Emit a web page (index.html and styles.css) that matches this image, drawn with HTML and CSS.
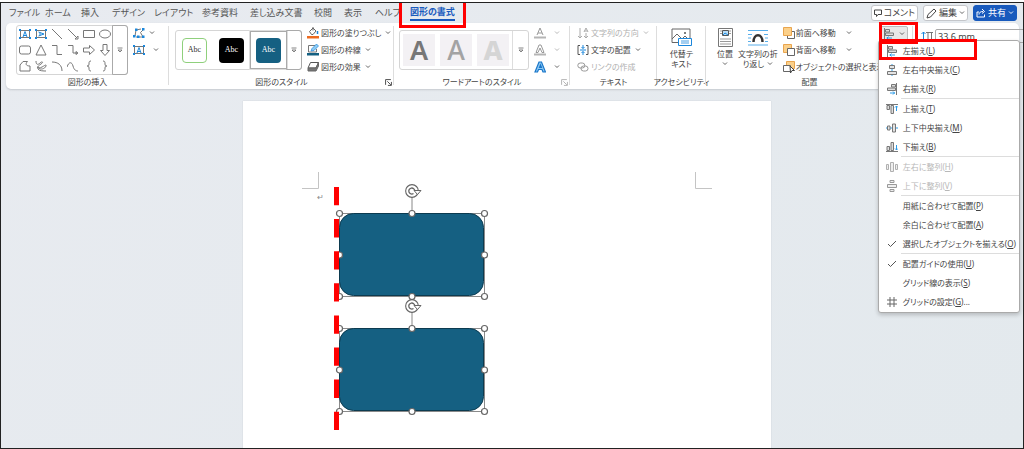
FILE: index.html
```
<!DOCTYPE html>
<html lang="ja">
<head>
<meta charset="utf-8">
<meta name="viewport" content="width=device-width, initial-scale=1">
<title>図形の書式</title>
<link rel="stylesheet" href="styles.css">
</head>
<body>
<svg class="defs" aria-hidden="true">
  <symbol id="chev" viewBox="0 0 6 4"><path d="M1 .5l2 2 2-2" fill="none" stroke="currentColor" stroke-width=".9"/></symbol>
  <symbol id="more" viewBox="0 0 6 6"><path d="M.5 1h5M1 3l2 2 2-2z" fill="none" stroke="#666" stroke-width=".8"/></symbol>
  <symbol id="launch" viewBox="0 0 6 6"><path d="M.5 5V.5H5M2 2l3 3M5.500 2.500v3h-3" fill="none" stroke="currentColor" stroke-width=".8"/></symbol>
  <symbol id="check" viewBox="0 0 12 12"><path d="M2 6l2.500 2.500L10 3" fill="none" stroke="#555"/></symbol>
  <symbol id="a-left" viewBox="0 0 12 12"><path d="M1.500 0v12" stroke="#777"/><path d="M2.500 1.500h4v2.500h-4zM2.500 5h8v2.500h-8z" fill="#ddd" stroke="#777"/><path d="M9 10H3.500M5.500 8.500L4 10l1.500 1.500" fill="none" stroke="#2b9be8"/></symbol>
  <symbol id="a-center" viewBox="0 0 12 12"><path d="M6 0v12" stroke="#2b9be8"/><path d="M3.500 1.500h5v3h-5zM1.500 7.500h9v3h-9z" fill="#e4e4e4" stroke="#777"/></symbol>
  <symbol id="a-right" viewBox="0 0 12 12"><path d="M10.500 0v12" stroke="#777"/><path d="M5.500 1.500h4V4h-4zM1.500 5h8v2.500h-8z" fill="#ddd" stroke="#777"/><path d="M4 10h5M7 8.500L8.500 10 7 11.500" fill="none" stroke="#2b9be8"/></symbol>
  <symbol id="a-top" viewBox="0 0 12 12"><path d="M0 1.500h12" stroke="#777"/><path d="M1 2.500h2.500v4H1zM5 2.500h2.500v8H5z" fill="#ddd" stroke="#777"/><path d="M10.500 8V3M9 4.500L10.500 3 12 4.500" fill="none" stroke="#2b9be8"/></symbol>
  <symbol id="a-mid" viewBox="0 0 12 12"><path d="M0 6h12" stroke="#2b9be8"/><path d="M1.500 4H4v4H1.500zM6.500 2h3v8h-3z" fill="#e4e4e4" stroke="#777"/></symbol>
  <symbol id="a-bottom" viewBox="0 0 12 12"><path d="M0 10.500h12" stroke="#777"/><path d="M1 5.500h2.500v4H1zM5 1.500h2.500v8H5z" fill="#ddd" stroke="#777"/><path d="M10.500 4v5M9 7.500L10.500 9 12 7.500" fill="none" stroke="#2b9be8"/></symbol>
  <symbol id="d-h" viewBox="0 0 12 12"><path d="M.5 3.500h2v5h-2zM4.500 1.500h3v9h-3zM9.500 3.500h2v5h-2z" fill="#eee" stroke="#b0b0b0"/></symbol>
  <symbol id="d-v" viewBox="0 0 12 12"><path d="M4 .5h4v2H4zM1.500 4.500h9v3h-9zM4 9.500h4v2H4z" fill="#eee" stroke="#999"/></symbol>
  <symbol id="grid" viewBox="0 0 12 12"><path d="M4 1v10M8 1v10M1 4h10M1 8h10" stroke="#666"/></symbol>
  <symbol id="selected" viewBox="0 0 155 113">
    <rect x="5.500" y="26.500" width="145" height="83" fill="#fff" stroke="#8a8a8a"/>
    <rect x="5.500" y="26.500" width="144" height="82" rx="14" fill="#156082" stroke="#0c3b50"/>
    <path d="M78 10v16" stroke="#888"/>
    <g fill="#fff" stroke="#666" stroke-width="1.200"><circle cx="5.500" cy="26.500" r="3"/><circle cx="78" cy="26.500" r="3"/><circle cx="150.500" cy="26.500" r="3"/><circle cx="5.500" cy="68" r="3"/><circle cx="150.500" cy="68" r="3"/><circle cx="5.500" cy="109.500" r="3"/><circle cx="78" cy="109.500" r="3"/><circle cx="150.500" cy="109.500" r="3"/></g>
    <circle cx="78" cy="4" r="5" fill="none" stroke="#666" stroke-width="3.800"/>
    <circle cx="78" cy="4" r="5" fill="#fff" stroke="#fff" stroke-width="1.600"/>
    <path d="M79.500 6.500a3 3 0 1 1 1.300-2.500" fill="none" stroke="#666" stroke-width="1.300"/>
    <path d="M80 3.500h7L83.500 7.500z" fill="#fff" stroke="#666"/>
  </symbol>
</svg>

<div class="app">
  <header class="topbar">
    <nav class="tabs">
      <a href="#">ファイル</a><a href="#">ホーム</a><a href="#">挿入</a><a href="#">デザイン</a><a href="#">レイアウト</a><a href="#">参考資料</a><a href="#">差し込み文書</a><a href="#">校閲</a><a href="#">表示</a><a href="#">ヘルプ</a><a href="#" class="active">図形の書式</a>
    </nav>
    <div class="actions">
      <button class="action"><svg width="8" height="8" viewBox="0 0 8 8"><path d="M.5 1h7v4.500H4l-1.500 2v-2h-2z" fill="none" stroke="#444"/></svg>コメント</button>
      <button class="action"><svg width="11" height="11" viewBox="0 0 11 11"><path d="M1 10l1-3.500 6-5.500 2 2-5.500 6z" fill="none" stroke="#444"/></svg>編集<svg class="chev"><use href="#chev"/></svg></button>
      <button class="action share"><svg width="10" height="10" viewBox="0 0 10 10"><path d="M3 4H1v5h7.500V6.500M3 6.500c0-2 1.500-3 4-3M6 1l2.500 2.500L6 5.500" fill="none" stroke="#fff"/></svg>共有<svg class="chev"><use href="#chev"/></svg></button>
    </div>
  </header>

  <main class="ribbon">
    <section class="group g-insert">
      <div class="group-body">
        <div class="gallery">
          <div class="shapes">
            <svg viewBox="0 0 12 12"><path d="M1.500 2.500h9v7h-9z" stroke="#777"/><path d="M4 9l2-5.500L8 9M4.500 7.500h3" stroke="#1b87dc"/><path class="dots" d="M0 1h2v2H0zM10 1h2v2h-2zM0 9h2v2H0zM10 9h2v2h-2z"/></svg>
            <svg viewBox="0 0 12 12"><path d="M1.500 2.500h9v7h-9z" stroke="#777"/><path d="M3.500 4L9 6 3.500 8M5 4.500v3" stroke="#1b87dc"/><path class="dots" d="M0 1h2v2H0zM10 1h2v2h-2zM0 9h2v2H0zM10 9h2v2h-2z"/></svg>
            <svg viewBox="0 0 12 12"><path d="M1 1l10 10"/></svg>
            <svg viewBox="0 0 12 12"><path d="M1 1l9 9M11 8v3H8z"/></svg>
            <svg viewBox="0 0 12 12"><path d="M.5 2.500h11v7H.5z"/></svg>
            <svg viewBox="0 0 12 12"><ellipse cx="6" cy="6" rx="5.500" ry="4"/></svg>
            <svg viewBox="0 0 12 12"><rect x=".5" y="2" width="11" height="8" rx="2"/></svg>
            <svg viewBox="0 0 12 12"><path d="M6 1l5 10H1z"/></svg>
            <svg viewBox="0 0 12 12"><path d="M1 1.500h5v9h5"/></svg>
            <svg viewBox="0 0 12 12"><path d="M1 1.500h5V9h4M9 7.500L11 9l-2 1.500z"/></svg>
            <svg viewBox="0 0 12 12"><path d="M.5 4h6V1.500L11.500 6l-5 4.500V8h-6z"/></svg>
            <svg viewBox="0 0 12 12"><path d="M4 .5v6H1.500L6 11.500l4.500-5H8v-6z"/></svg>
            <svg viewBox="0 0 12 12"><path d="M1 11V5l3-3.500h4.500C6 4 7 6 11 6v5z"/></svg>
            <svg viewBox="0 0 12 12"><path d="M1 1c0 4 2 4 4 2s4-1 1 1-5 4-2 4 8-5 7-2-6 4-7 2-2-1-1 1 6 2 8 2"/></svg>
            <svg viewBox="0 0 12 12"><path d="M1 2c6 0 10 3 10 9"/></svg>
            <svg viewBox="0 0 12 12"><path d="M0 7c2-6 5-5 6-1s3 5 5 5"/></svg>
            <svg viewBox="0 0 12 12"><path d="M8 1C6 1 6 2 6 4S5 6 4 6c1 0 2 0 2 2s0 3 2 3"/></svg>
            <svg viewBox="0 0 12 12"><path d="M4 1c2 0 2 1 2 3s1 2 2 2c-1 0-2 0-2 2s0 3-2 3"/></svg>
          </div>
          <button class="more framed" aria-label="その他の図形"><svg><use href="#more"/></svg></button>
        </div>
        <div class="list">
          <button class="cmd" aria-label="図形の編集"><svg class="ico" viewBox="0 0 12 12"><path d="M2 9l1-6 5-1M10 3L7.500 5.500 10 10H3" fill="none" stroke="#777"/><path d="M0 8h2.500v2.500H0zM2 1.500h2.500V4H2zM9 1h2.500v2.500H9zM9 8.500h2.500V11H9zM4 8.500h2.500V11H4z" fill="#1b87dc"/></svg><svg class="chev"><use href="#chev"/></svg></button>
          <button class="cmd" aria-label="テキスト ボックス"><svg class="ico" viewBox="0 0 12 12"><path d="M1.500 2.500h9v7h-9z" fill="none" stroke="#777"/><path d="M4 9l2-5.500L8 9M4.500 7.500h3" fill="none" stroke="#1b87dc"/><path d="M0 1h2v2H0zM10 1h2v2h-2zM0 9h2v2H0zM10 9h2v2h-2z" fill="#1b87dc"/></svg><svg class="chev apart"><use href="#chev"/></svg></button>
        </div>
      </div>
      <h2>図形の挿入</h2>
    </section>

    <section class="group g-style">
      <div class="group-body">
        <div class="gallery short">
          <button class="swatch"><span class="abc green">Abc</span></button>
          <button class="swatch"><span class="abc black">Abc</span></button>
          <button class="swatch chosen"><span class="abc blue">Abc</span></button>
          <button class="more framed" aria-label="その他のスタイル"><svg><use href="#more"/></svg></button>
        </div>
        <div class="list">
          <button class="cmd"><svg class="ico" viewBox="0 0 12 12"><path d="M2.500 4.500L6 1l3 3-3 3.500H4.500zM6 0v3.500" fill="#fff" stroke="#666"/><path d="M10.500 4v3" stroke="#1b87dc" stroke-width="1.500"/><path d="M0 9h12v2.500H0z" fill="#ed6b21"/></svg>図形の塗りつぶし<svg class="chev"><use href="#chev"/></svg></button>
          <button class="cmd"><svg class="ico" viewBox="0 0 12 12"><path d="M8 1.500H1.500V8h8V5" fill="none" stroke="#777"/><path d="M4 7l1-2.500L9.500 0l2 2L7 6.500z" fill="#8fccf4" stroke="#1b87dc" stroke-width=".7"/><path d="M0 9h12v2.500H0z" fill="#156082"/></svg>図形の枠線<svg class="chev"><use href="#chev"/></svg></button>
          <button class="cmd"><svg class="ico" viewBox="0 0 12 12"><path d="M3.500 1.500h8L9 7H1z" fill="#fff" stroke="#555"/><path d="M1 7h8l2.500-5.500V5L9 10H1z" fill="#777" stroke="#666"/></svg>図形の効果<svg class="chev"><use href="#chev"/></svg></button>
        </div>
      </div>
      <h2>図形のスタイル</h2>
      <button class="launcher" aria-label="図形の書式設定"><svg><use href="#launch"/></svg></button>
    </section>

    <section class="group g-wordart">
      <div class="group-body">
        <div class="gallery short tiles">
          <button class="tile dark">A</button><button class="tile mid">A</button><button class="tile light">A</button>
          <button class="more" aria-label="その他のワードアート"><svg><use href="#more"/></svg></button>
        </div>
        <div class="list">
          <button class="cmd off wide" aria-label="文字の塗りつぶし"><svg class="ico" viewBox="0 0 12 12"><path d="M3 8l3-7 3 7M4 6h4" fill="none" stroke="#999"/><path d="M0 9.500h12v2H0z" fill="#b5b5b5"/></svg><svg class="chev"><use href="#chev"/></svg></button>
          <button class="cmd off wide" aria-label="文字の輪郭"><svg class="ico" viewBox="0 0 12 12"><path d="M2 8.500L5 1h2l3 7.500H8L6 4 4 8.500z" fill="none" stroke="#999"/><path d="M0 9.500h12v2H0z" fill="#b5b5b5"/></svg><svg class="chev"><use href="#chev"/></svg></button>
          <button class="cmd wide" aria-label="文字の効果"><svg class="ico" viewBox="0 0 12 12"><path d="M1 11L5 1h2.500l4 10H9L8 8.500H4.500L3.500 11zM5.500 6.500h2L6.500 4z" fill="#8cc8f4" stroke="#1976c9" stroke-width="1.200"/></svg><svg class="chev"><use href="#chev"/></svg></button>
        </div>
      </div>
      <h2>ワードアートのスタイル</h2>
      <button class="launcher off" aria-label="文字の効果の設定"><svg><use href="#launch"/></svg></button>
    </section>

    <section class="group g-text">
      <div class="group-body">
        <div class="list">
          <button class="cmd off"><svg class="ico" viewBox="0 0 12 12"><path d="M3 1v10M1 9l2 2 2-2M7 5l2-4 2 4M7.500 4h3M9 6v5M7 9l2 2 2-2" fill="none" stroke="#aaa"/></svg>文字列の方向<svg class="chev"><use href="#chev"/></svg></button>
          <button class="cmd"><svg class="ico" viewBox="0 0 12 12"><path d="M3 1.500H1v9h2M9 1.500h2v9H9" fill="none" stroke="#555"/><path d="M3 6h6M6 1v3.500M6 7.500V11M4.500 3L6 4.500 7.500 3M4.500 9L6 7.500 7.500 9" fill="none" stroke="#1b87dc"/></svg>文字の配置<svg class="chev"><use href="#chev"/></svg></button>
          <button class="cmd off"><svg class="ico" viewBox="0 0 12 12"><rect x=".8" y="2" width="7" height="5" rx="2.500" fill="none" stroke="#999"/><rect x="4" y="5" width="7" height="5" rx="2.500" fill="none" stroke="#999"/></svg>リンクの作成</button>
        </div>
      </div>
      <h2>テキスト</h2>
    </section>

    <section class="group g-alt">
      <div class="group-body">
        <button class="big"><svg width="21" height="19" viewBox="0 0 21 19"><path d="M7 14.500H1V1h18v9M1 11l5-5 5 5 3-3 3 3" fill="none" stroke="#666"/><circle cx="14" cy="5" r="1" fill="#555"/><path d="M7.500 10.500h13v7h-13z" fill="#fff" stroke="#1b87dc"/><path d="M10 13h8M10 15h8" stroke="#1b87dc" stroke-width=".8"/></svg><span>代替テ</span><span>キスト</span></button>
      </div>
      <h2>アクセシビリティ</h2>
    </section>

    <section class="group g-arrange">
      <div class="group-body">
        <button class="big"><svg width="15" height="19" viewBox="0 0 15 19"><path d="M.5 .5h14v18H.5z" fill="#fff" stroke="#777"/><path d="M2 3h2M2 5.500h2M11 3h2M11 5.500h2M2 11h11M2 13.500h11M2 16h11" stroke="#999"/><path d="M4.500 2.500h6v5h-6z" fill="#b9def7" stroke="#555"/><path d="M5 7l2-2 3 2" fill="none" stroke="#1b87dc"/></svg><span>位置</span><svg class="chev"><use href="#chev"/></svg></button>
        <button class="big"><svg width="20" height="19" viewBox="0 0 20 19"><path d="M0 2.500h20M0 6.500h4M16 6.500h4M0 10h3M17 10h3M0 13.500h3M17 13.500h3M0 17h20" stroke="#58aeea"/><path d="M5.500 14c0-9 9-9 9 0" fill="none" stroke="#333" stroke-width="2.500"/></svg><span>文字列の折</span><span class="line">り返し<svg class="chev"><use href="#chev"/></svg></span></button>
        <div class="list">
          <button class="cmd front"><svg class="ico" viewBox="0 0 12 12"><path d="M8 4.500h3.500v7h-7V9" fill="none" stroke="#666"/><path d="M.5 .5h8v8h-8z" fill="#fbd08a" stroke="#e9a54e"/></svg>前面へ移動<svg class="chev"><use href="#chev"/></svg></button>
          <button class="cmd front"><svg class="ico" viewBox="0 0 12 12"><path d="M.5 .5h8v8h-8z" fill="#fbd08a" stroke="#e9a54e"/><path d="M4.500 4.500h7v7h-7z" fill="#fff" stroke="#666"/></svg>背面へ移動<svg class="chev"><use href="#chev"/></svg></button>
          <button class="cmd"><svg class="ico" viewBox="0 0 12 12"><path d="M3.500 .5h8v7h-8z" fill="#fbd08a" stroke="#e9a54e"/><path d="M.5 4.500h7v6h-7z" fill="#fff" stroke="#666"/><path d="M7 5l4.500 4.500H9L7.500 12z" fill="#fff" stroke="#444"/></svg>オブジェクトの選択と表示</button>
        </div>
        <div class="align">
          <button class="align-btn" aria-label="配置"><svg class="ico"><use href="#a-left"/></svg><svg class="chev"><use href="#chev"/></svg></button>
          <div class="menu" role="menu">
            <button role="menuitem"><svg><use href="#a-left"/></svg><span>左揃え(<u>L</u>)</span></button>
            <button role="menuitem"><svg><use href="#a-center"/></svg><span>左右中央揃え(<u>C</u>)</span></button>
            <button role="menuitem"><svg><use href="#a-right"/></svg><span>右揃え(<u>R</u>)</span></button>
            <hr>
            <button role="menuitem"><svg><use href="#a-top"/></svg><span>上揃え(<u>T</u>)</span></button>
            <button role="menuitem"><svg><use href="#a-mid"/></svg><span>上下中央揃え(<u>M</u>)</span></button>
            <button role="menuitem"><svg><use href="#a-bottom"/></svg><span>下揃え(<u>B</u>)</span></button>
            <hr>
            <button role="menuitem" disabled><svg><use href="#d-h"/></svg><span>左右に整列(<u>H</u>)</span></button>
            <button role="menuitem" disabled><svg><use href="#d-v"/></svg><span>上下に整列(<u>V</u>)</span></button>
            <hr>
            <button role="menuitem"><svg></svg><span>用紙に合わせて配置(<u>P</u>)</span></button>
            <button role="menuitem"><svg></svg><span>余白に合わせて配置(<u>A</u>)</span></button>
            <button role="menuitem"><svg><use href="#check"/></svg><span>選択したオブジェクトを揃える(<u>O</u>)</span></button>
            <hr>
            <button role="menuitem"><svg><use href="#check"/></svg><span>配置ガイドの使用(<u>U</u>)</span></button>
            <button role="menuitem"><svg></svg><span>グリッド線の表示(<u>S</u>)</span></button>
            <button role="menuitem"><svg><use href="#grid"/></svg><span>グリッドの設定(<u>G</u>)...</span></button>
          </div>
          <span class="mark mark-btn"></span>
          <span class="mark mark-item"></span>
        </div>
      </div>
      <h2>配置</h2>
    </section>

    <section class="group g-size">
      <label class="size"><svg width="12" height="11" viewBox="0 0 12 11"><path d="M2.500 10V1M.5 3l2-2 2 2" fill="none" stroke="#1b87dc"/><path d="M5 1.500h7M7 1.500V10h3.500V1.500" fill="none" stroke="#777"/></svg><input type="text" value="33.6 mm" aria-label="図形の高さ"><svg class="up" viewBox="0 0 6 4"><path d="M1 3l2-2 2 2" fill="none" stroke="#555"/></svg></label>
    </section>
  </main>

  <div class="workspace">
    <div class="page">
      <svg class="corner left" viewBox="0 0 17 17"><path d="M16.500 0v16.500H0"/></svg>
      <svg class="corner right" viewBox="0 0 17 17"><path d="M.5 0v16.500H17"/></svg>
      <span class="pilcrow">↵</span>
      <svg class="shape first"><use href="#selected"/></svg>
      <svg class="shape second"><use href="#selected"/></svg>
      <svg class="guide" viewBox="0 0 5 244"><path d="M2.500 0v243" stroke="#f00" stroke-width="5" stroke-dasharray="18.300 13.800"/></svg>
    </div>
  </div>
</div>
</body>
</html>
```

FILE: styles.css
```
* { box-sizing: border-box; }

body {
  margin: 0;
  min-height: 100vh;
  display: flex;
  padding-top: 2px;
  background: #fff;
  color: #444;
  font: 8px/10px "Noto Sans", "Noto Sans CJK JP", sans-serif;
  font-feature-settings: "palt";
}

button, input {
  font: inherit;
  font-feature-settings: inherit;
  color: inherit;
  border: 0;
  padding: 0;
  background: none;
  white-space: nowrap;
}

svg { flex: none; }
.defs { position: absolute; width: 0; height: 0; }
.chev { width: 6px; height: 4px; color: #555; }
.ico { width: 12px; height: 12px; }

.app {
  flex: 1;
  min-width: 0;
  display: flex;
  flex-direction: column;
  border: 1px solid #222;
  background: linear-gradient(135deg, #e8ebf0, #e3e9ed);
  overflow: hidden;
}

/* Tabs */
.topbar {
  display: flex;
  justify-content: space-between;
  height: 20px;
  padding: 0 6px 0 8px;
}

.tabs {
  display: grid;
  grid-template-columns: 36px 36px 31px 42px 48px 48px 64px 30px 31px 35px auto;
  align-items: center;
  font-size: 9px;
  line-height: 14px;
}

.tabs a { color: #555; text-decoration: none; white-space: nowrap; }

.tabs .active {
  position: relative;
  color: #185abd;
  font-weight: bold;
  border-bottom: 2px solid #185abd;
}

.tabs .active::after {
  content: "";
  position: absolute;
  inset: -5px -11px -9px;
  border: 3px solid #f00;
  z-index: 3;
}

.actions { display: flex; gap: 5px; padding: 2px 0; font-size: 9px; }

.action {
  display: flex;
  align-items: center;
  gap: 2px;
  padding: 0 2px;
  border: 1px solid #c4c6ca;
  border-radius: 3px;
  background: #fff;
}

.share { background: #185abd; border-color: #185abd; color: #fff; }
.share .chev { color: #fff; }

/* Ribbon */
.ribbon {
  display: flex;
  height: 66px;
  margin: 0 4px 0 5px;
  background: #fff;
  border-radius: 5px;
  box-shadow: 0 1px 2px #c5c9cf;
}

.group {
  position: relative;
  flex: none;
  display: flex;
  flex-direction: column;
  padding-top: 1px;
}

.group::after {
  content: "";
  position: absolute;
  inset: 3px 0 4px auto;
  border-right: 1px solid #ddd;
}

.group h2 {
  margin: 0;
  font-size: 8px;
  line-height: 12px;
  font-weight: normal;
  text-align: center;
  white-space: nowrap;
}

.group-body { display: flex; height: 52px; padding: 0 5px; }
.g-insert { width: 163px; }
.g-insert .group-body { padding-left: 10px; }
.g-style { width: 225px; }
.g-style .group-body { padding-left: 6px; }
.g-wordart { width: 176px; }
.g-text { width: 87px; }
.g-alt { width: 49px; }
.g-alt .group-body, .g-alt h2 { justify-content: center; }
.g-alt h2 { display: flex; }
.g-arrange { width: 207px; }
.g-size { flex: 1; margin-right: 26px; }

.gallery {
  display: flex;
  align-self: flex-start;
  height: 50px;
  margin-top: 1px;
  border: 1px solid #d5d5d5;
  border-radius: 3px;
}

.gallery.short { height: 40px; margin-top: 6px; }

.shapes {
  display: grid;
  grid-template-columns: repeat(6, 16px);
  grid-auto-rows: 16px;
  place-items: center;
}

.shapes svg { width: 12px; height: 12px; fill: none; stroke: #777; stroke-width: 1; }
.shapes .dots { fill: #1b87dc; stroke: none; }

.more { width: 16px; display: grid; place-items: center; border-left: 1px solid #ddd; }
.more svg { width: 6px; height: 6px; }
.more.framed { margin: -1px; border: 1px solid #aaa; border-radius: 0 3px 3px 0; }

.swatch { width: 37px; display: grid; place-items: center; }
.swatch.chosen { border: 1px solid #aaa; outline: 1px solid #ddd; }

.abc {
  width: 25px;
  height: 25px;
  display: grid;
  place-items: center;
  border-radius: 4px;
  font: 8px/10px "Liberation Serif", serif;
  color: #fff;
}

.green { border: 1px solid #8fd07c; color: #333; }
.black { background: #000; }
.blue { background: #156082; }

.tiles { gap: 5px; padding-left: 3px; align-items: center; }
.tiles .more { height: 38px; margin-left: -2px; }
.tile { width: 32px; height: 32px; background: #f3f1f4; font: 600 27px/32px "Noto Sans", sans-serif; }
.dark { color: #777; }
.mid { color: #a3a3a3; font-weight: 500; }
.light { color: #d5d5d5; font-weight: 800; }

.list { display: grid; grid-auto-rows: 17px; align-content: start; margin-left: 5px; }
.cmd { display: flex; align-items: center; gap: 2px; }
.cmd .chev { margin-left: 2px; }
.cmd .apart { margin-left: 6px; }
.cmd.front .chev { margin-left: 9px; }
.cmd.wide .chev { margin-left: 6px; }
.off, .off .chev { color: #b0b0b0; }
.g-text .list { margin-left: 2px; }

.launcher { position: absolute; right: 2px; bottom: 3px; width: 7px; height: 7px; display: flex; }
.launcher svg { width: 7px; height: 7px; }

.big {
  display: flex;
  flex-direction: column;
  align-items: center;
  padding-top: 4px;
}

.big > svg:first-child { margin-bottom: 2px; }
.big > .chev { margin-top: 3px; }
.line { display: flex; align-items: center; gap: 3px; }
.g-arrange .group-body { padding: 0 3px 0 11px; gap: 5px; }
.g-arrange .list { margin: 0; width: 92px; }
.g-arrange .cmd { gap: 1px; }

/* Align button and its menu */
.align { position: relative; padding-top: 2px; }

.align-btn {
  display: flex;
  align-items: center;
  gap: 4px;
  height: 15px;
  width: 28px;
  padding: 0 2px;
  border: 1px solid #bbb;
  border-radius: 2px;
  background: #e8e8e8;
}

.menu {
  position: absolute;
  z-index: 2;
  top: 16px;
  left: -2px;
  width: 142px;
  padding: 0 0 1px;
  background: #fff;
  border: 1px solid #aaa;
  border-radius: 3px;
  box-shadow: 0 2px 4px #0003;
}

.menu button {
  display: flex;
  align-items: center;
  gap: 5px;
  width: 100%;
  height: 19px;
  padding-left: 7px;
}

.menu svg { width: 12px; height: 12px; }
.menu button:disabled { color: #b8b8b8; }
.menu hr { margin: 0 0 0 22px; border: 0; border-top: 1px solid #ddd; }

.mark { position: absolute; z-index: 3; border: 3px solid #f00; }
.mark-btn { top: -2px; left: -1px; width: 39px; height: 22px; }
.mark-item { top: 15px; left: -1px; width: 98px; height: 21px; }

/* Size */
.size { display: flex; align-items: center; margin: 5px 0 0 8px; height: 14px; position: relative; }
.size input {
  flex: 1;
  min-width: 0;
  height: 14px;
  margin-left: 2px;
  margin-right: 5px;
  padding-left: 2px;
  border: 1px solid #aaa;
  border-radius: 2px;
  font-size: 9px;
}
.size .up { position: absolute; right: 8px; top: 3px; width: 6px; height: 4px; }

/* Document */
.workspace {
  flex: 1;
  display: flex;
  justify-content: center;
  padding: 12px 10px 0 0;
}

.page {
  position: relative;
  width: 528px;
  min-height: 346px;
  background: #fff;
  box-shadow: 0 0 1px #bbc3c9;
}

.corner { position: absolute; top: 71px; width: 17px; height: 17px; fill: none; stroke: #c4c4c4; }
.corner.left { left: 59px; }
.corner.right { right: 59px; }
.pilcrow { position: absolute; left: 74px; top: 91px; color: #888; }
.shape { position: absolute; left: 91px; width: 155px; height: 113px; overflow: visible; }
.first { top: 86px; }
.second { top: 201px; }
.shape use, #selected { overflow: visible; }
.guide { position: absolute; left: 91px; top: 86px; width: 5px; height: 244px; }
```
